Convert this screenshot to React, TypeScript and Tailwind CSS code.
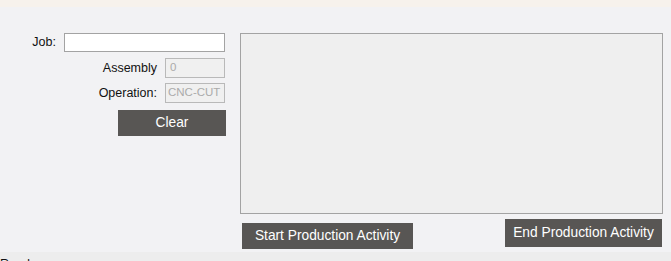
export default function App() {
    return (
        <div className="w-[671px] h-[261px] overflow-hidden bg-[#f2f2f4] text-[#111] font-['Liberation_Sans',Arial,sans-serif]">
            <div className="h-[7px] bg-[#f7f2ec]" />

            <div className="flex h-[245px] pt-[26px]">
                {/* left form */}
                <div className="w-[240px] flex flex-col items-end pr-[15px]">
                    <div className="flex items-center gap-x-2 h-[19px]">
                        <span className="text-[12.5px]">Job:</span>
                        <input className="w-[161px] h-[19px] bg-white border border-[#a3a3a3] outline-none px-1 text-[12px]" />
                    </div>
                    <div className="flex items-center gap-x-2 mt-[6px] h-[20px]">
                        <span className="text-[12.5px]">Assembly</span>
                        <div className="w-[60px] h-[20px] bg-[#f0f0f0] border border-[#b9b9b9] text-[11.5px] text-[#ababab] px-1 flex items-center">0</div>
                    </div>
                    <div className="flex items-center gap-x-2 mt-[5px] h-[20px]">
                        <span className="text-[12.5px]">Operation:</span>
                        <div className="w-[60px] h-[20px] bg-[#f0f0f0] border border-[#b9b9b9] text-[11.5px] text-[#ababab] px-[2px] flex items-center whitespace-nowrap overflow-hidden">CNC-CUT</div>
                    </div>
                    <button className="mt-[7px] mr-[-1px] w-[108px] h-[26px] bg-[#585654] text-white text-[13.75px] flex items-center justify-center">
                        Clear
                    </button>
                </div>

                {/* right panel */}
                <div className="flex flex-col w-[423px]">
                    <div className="h-[181px] bg-[#efefef] border border-[#a3a3a3]" />
                    <div className="flex items-start justify-between pl-[2px] pr-[1px]">
                        <button className="mt-[9px] w-[171px] h-[26px] bg-[#585654] text-white text-[13.75px] flex items-center justify-center">
                            Start Production Activity
                        </button>
                        <button className="mt-[5px] w-[157px] h-[28px] bg-[#585654] text-white text-[13.75px] flex items-center justify-center">
                            End Production Activity
                        </button>
                    </div>
                </div>
            </div>

            <div className="h-[9px] bg-[#ededed] pt-[5px] pl-0 text-[12.5px] leading-[14px]">
                Ready
            </div>
        </div>
    )
}
